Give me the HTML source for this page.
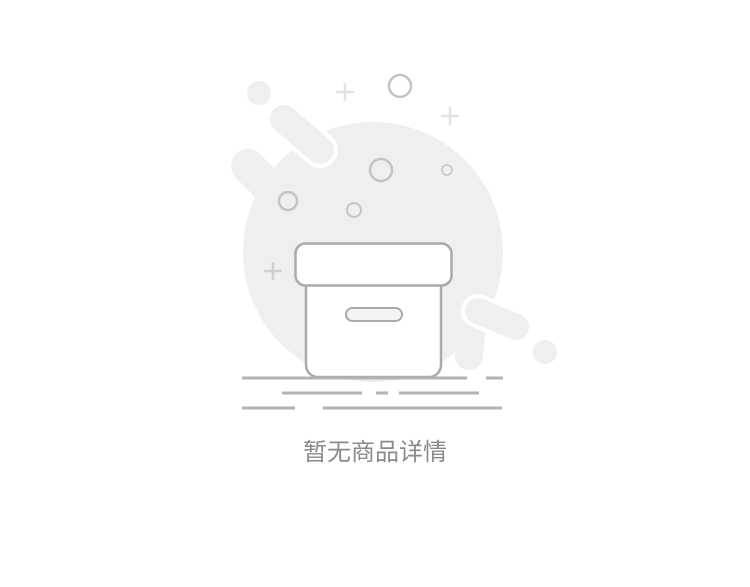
<!DOCTYPE html>
<html><head><meta charset="utf-8"><style>
html,body{margin:0;padding:0;background:#fff;width:750px;height:587px;overflow:hidden}
.t{position:absolute;left:0;width:750px;top:438px;text-align:center;font:24px "Liberation Sans","Noto Sans CJK SC",sans-serif;color:#8a8a8a;line-height:30px}
</style></head><body>
<svg width="750" height="587" style="position:absolute;left:0;top:0">
<g stroke-linecap="round" fill="none">
<circle cx="373" cy="252" r="130" fill="#efefef"/>
<line x1="248" y1="166" x2="300" y2="218" stroke="#efefef" stroke-width="34"/>
<line x1="284" y1="119" x2="320" y2="150" stroke="#fff" stroke-width="36"/>
<line x1="284" y1="119" x2="320" y2="150" stroke="#efefef" stroke-width="28"/>
<line x1="472" y1="322" x2="469" y2="356" stroke="#efefef" stroke-width="28"/>
<line x1="478" y1="311" x2="516" y2="327" stroke="#fff" stroke-width="34"/>
<line x1="478" y1="311" x2="516" y2="327" stroke="#efefef" stroke-width="26"/>
</g>
<circle cx="259" cy="93" r="12" fill="#efefef"/>
<circle cx="545" cy="352" r="12" fill="#efefef"/>
<g fill="none" stroke="#c4c4c4" stroke-width="2.5">
<circle cx="400" cy="86" r="11"/>
<circle cx="381" cy="170" r="11"/>
<circle cx="288" cy="201" r="9"/>
<circle cx="354" cy="210" r="7" stroke-width="2"/>
<circle cx="447" cy="170" r="5" stroke-width="1.5"/>
</g>
<g stroke-width="2.5">
<path d="M336 92h18M345 83v18" stroke="#e3e3e3"/>
<path d="M441 116h18M450 107v18" stroke="#e3e3e3"/>
<path d="M264 271h18M273 262v18" stroke="#cfcfcf"/>
</g>
<rect x="306" y="270" width="135" height="107" rx="12" fill="#fff" stroke="#aaa" stroke-width="2.5"/>
<rect x="295.5" y="243.5" width="156" height="42" rx="10" fill="#fff" stroke="#aaa" stroke-width="2.5"/>
<rect x="346" y="308" width="56" height="13" rx="6.5" fill="#f3f5f4" stroke="#aaa" stroke-width="2"/>
<g stroke="#b3b3b3" stroke-width="3">
<path d="M242 378H467M486 378H503M282 393H362M376 393H388M399 393H479M242 408H295M323 408H502"/>
</g>
</svg>
<div class="t">暂无商品详情</div>
</body></html>
